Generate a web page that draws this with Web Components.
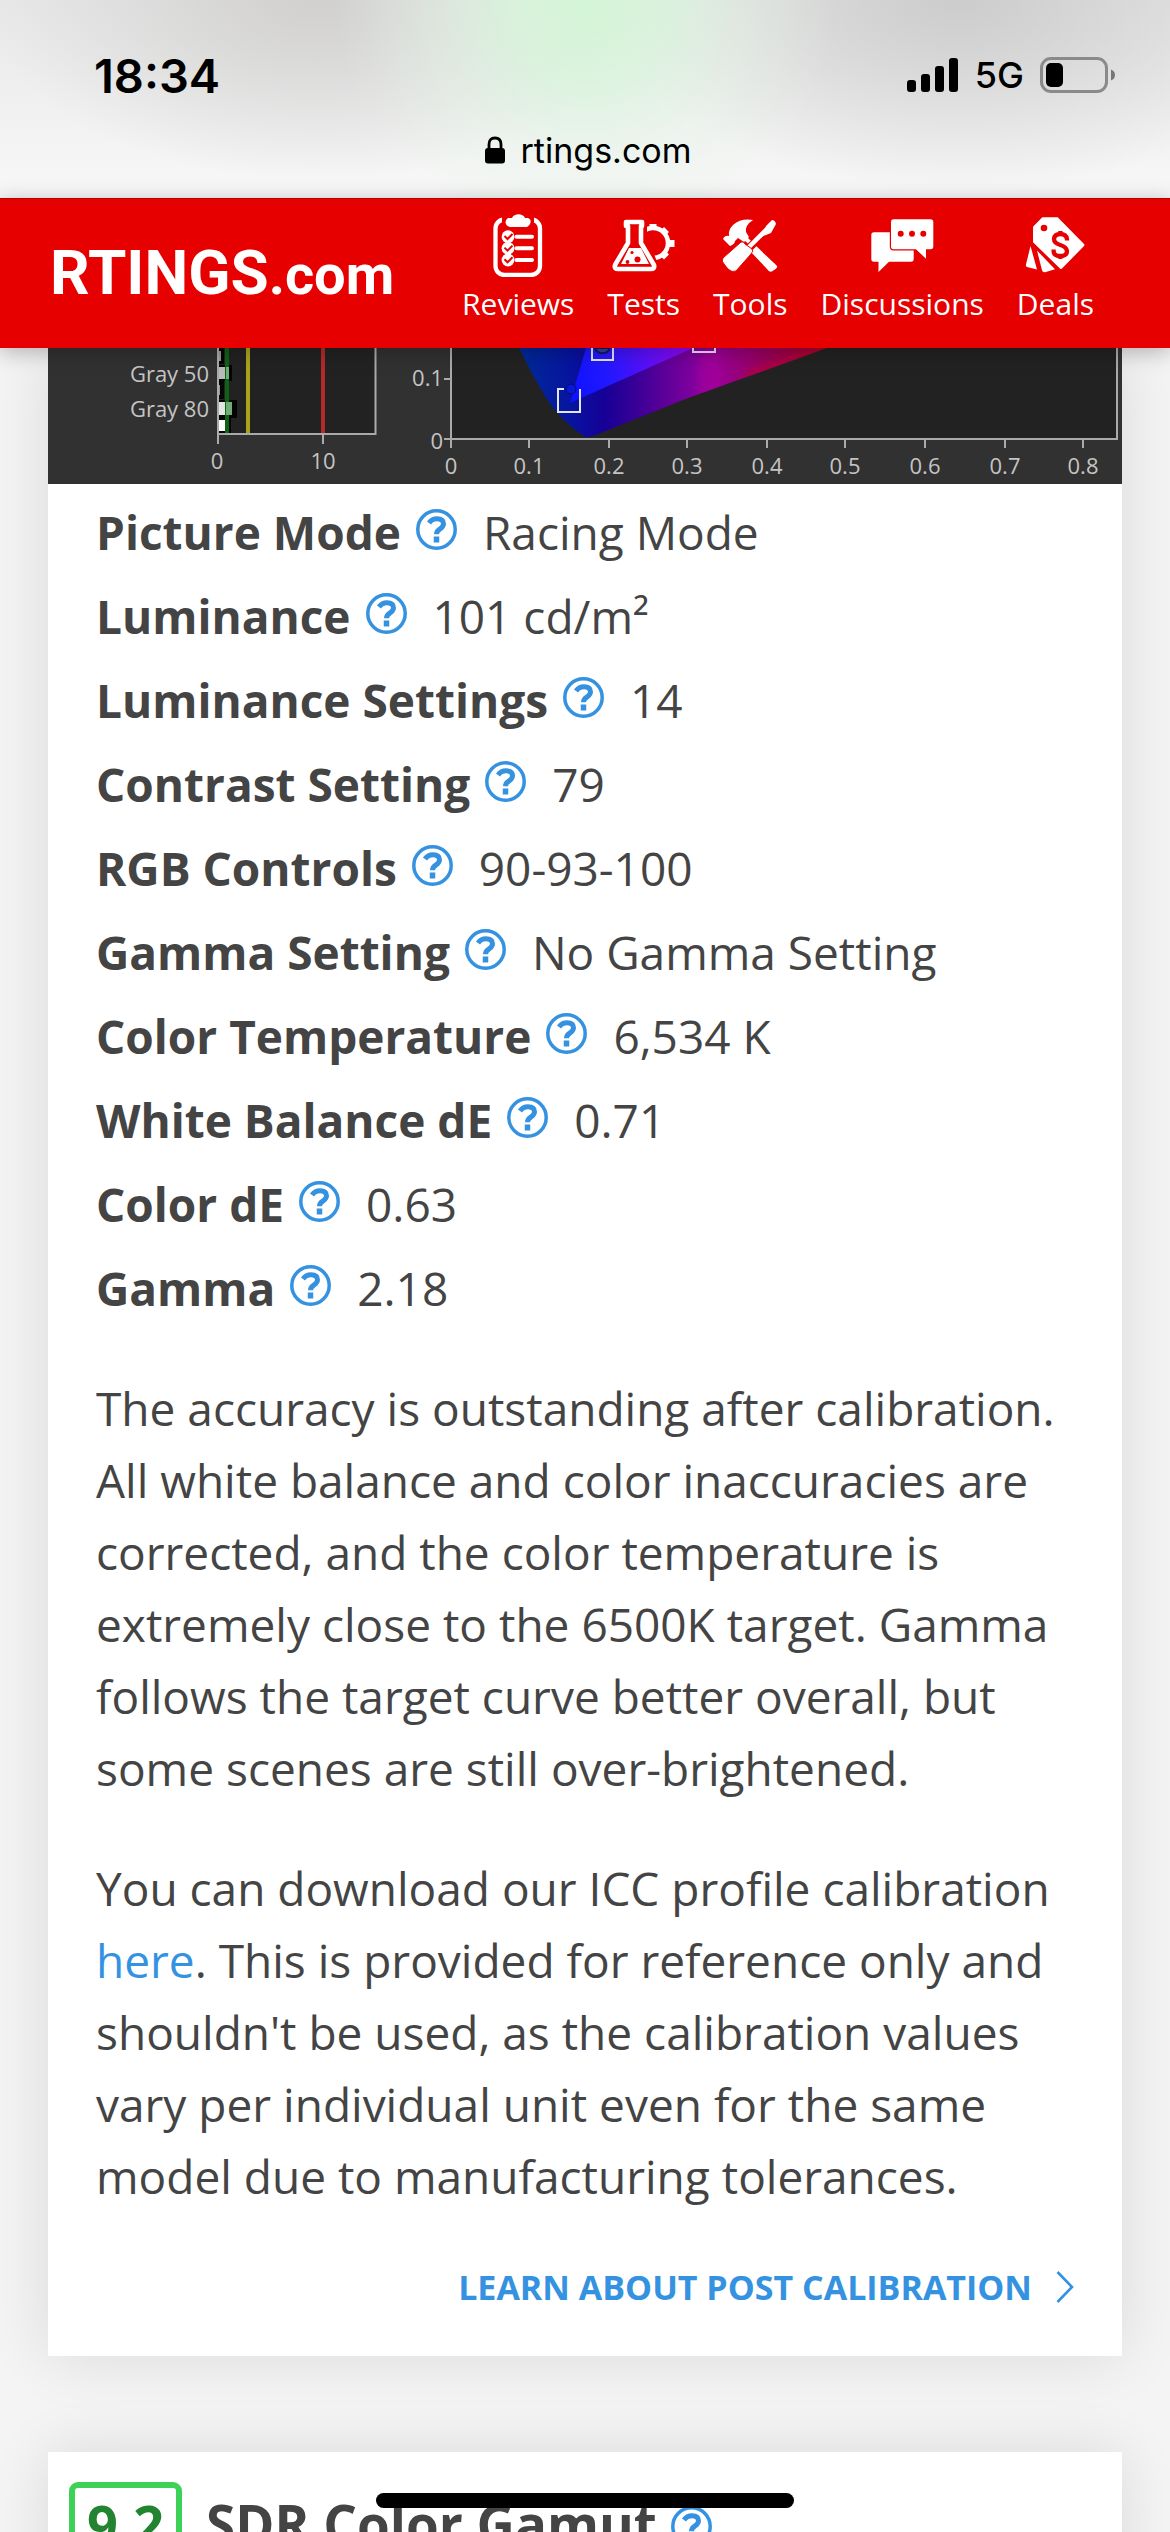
<!DOCTYPE html>
<html lang="en">
<head>
<meta charset="utf-8">
<meta name="viewport" content="width=device-width, initial-scale=1">
<title>RTINGS.com</title>
<style>
  html, body { margin: 0; height: 100%; }
  body { overflow: hidden; background: #f4f4f4; color: #444; font-family: "Open Sans", "Noto Sans", sans-serif; font-size: 46px; }
</style>
</head>
<body>
<app-screen>
  <status-bar slot="top" time="18:34" network="5G" site="rtings.com"></status-bar>
  <site-header slot="top">
    <nav-item label="Reviews"><svg viewBox="0 0 64 64" fill="#fff"><rect x="9.500" y="6.500" width="44.500" height="55.500" rx="9" fill="none" stroke="#fff" stroke-width="4.300"/><path d="M16 3h32v6l-5 7H21l-5-7z" fill="#e60000"/><path d="M22 5h4c2-5 11-5 13 0h3c5 2 2 8-1 9H24c-5-1-6-6-2-9z"/><path d="M30.500 23.700H46M30.500 35.300H46M30.500 47H46" stroke="#fff" stroke-width="4" stroke-linecap="round"/><circle cx="22" cy="23.700" r="6.400"/><circle cx="22" cy="35.300" r="6.400"/><circle cx="22" cy="47" r="6.400"/><path d="M18.500 23l3 3 5-5M18.500 34.600l3 3 5-5M18.500 46.300l3 3 5-5" fill="none" stroke="#e60000" stroke-width="2"/></svg></nav-item>
    <nav-item label="Tests"><svg viewBox="0 0 64 64" fill="#fff"><circle cx="41" cy="30" r="15" fill="none" stroke="#fff" stroke-width="4.500"/><g stroke="#fff" stroke-width="7"><path d="M41 16v-5M50.500 20.500l4-4M55 30.500h7.500M50.500 40l4 4"/></g><path d="M10 5h25v19l13 32-4 5H-2l2-9 14-26z" fill="#e60000"/><path d="M14 9h16v4h-1v17l13 22q1 4-3 4H6q-4 0-3-4l13-22V13h-2z" fill="none" stroke="#fff" stroke-width="4.600" stroke-linejoin="round"/><path d="M17 35h12l8 16H9z"/><g fill="#e60000"><circle cx="20" cy="39.500" r="1.600"/><circle cx="25.500" cy="46.500" r="3"/><circle cx="15.500" cy="49" r="1.900"/></g></svg></nav-item>
    <nav-item label="Tools"><svg viewBox="0 0 64 64" fill="#fff"><path d="M15 12Q23 5 35 7Q27 12 28 19L31 24L26 29L20 25L17 28Q17 31 12 33L5 26Q7 22 11 23Q10 17 15 12z"/><path d="M26 24l32 31" stroke="#fff" stroke-width="4"/><path d="M37 34l20 17q4 4-1 6-4 4-7-1L32 38z"/><path d="M30 36L51 15" stroke="#e60000" stroke-width="8"/><path d="M29 36L49 16" stroke="#fff" stroke-width="4.500"/><path d="M48 13l6-6q3 0 4 4l-5 9-5 2-5 2z"/><path d="M5 45l18-16q3-1 4 2l7 5q2 2-1 5L18 58q-4 2-8-2l-4-5q-3-3-1-6z" stroke="#e60000"/></svg></nav-item>
    <nav-item label="Discussions"><svg viewBox="0 0 64 64" fill="#fff"><path d="M4 19.300h37q2.700 0 2.700 2.700v24q0 2.700-2.700 2.700H19L8.500 59V48.700H4Q1.300 48.700 1.300 46V22q0-2.700 2.700-2.700z"/><path d="M23.500 6.300h37q2.800 0 2.800 2.700v24.500q0 2.800-2.800 2.800H56v9.500l-10-9.500H23.500q-2.500 0-2.500-2.800V9q0-2.700 2.500-2.700z" stroke="#e60000" stroke-width="2.400" paint-order="stroke"/><g fill="#e60000"><circle cx="30.700" cy="20.700" r="3"/><circle cx="42" cy="20.700" r="3"/><circle cx="53.300" cy="20.700" r="3"/></g></svg></nav-item>
    <nav-item label="Deals"><svg viewBox="0 0 64 64" fill="#fff"><path d="M19.300 4.300h15.400L61 31q1 1 0 2L39 55.500q-1 1-2 0L10 29.300V13.700z"/><path d="M7.500 33L14 56.500 4 54q-1.500-1-1-2.500zM14 37.500L32 56.300 22 59.300q-2.500.3-3-2z"/><circle cx="21" cy="15" r="3.300" fill="#e60000"/><path d="M44 27.500v-1.500q-1-5-6.700-5t-6.300 5q0 4 6.300 6t6.700 6q0 5-6.700 5t-6.700-5v-1.500M37.400 18v4M37.400 42v4" fill="none" stroke="#e60000" stroke-width="4.300"/></svg></nav-item>
  </site-header>
  <result-card>
    <calibration-chart></calibration-chart>
    <spec-list>
      <spec-row label="Picture Mode">Racing Mode</spec-row>
      <spec-row label="Luminance">101 cd/m²</spec-row>
      <spec-row label="Luminance Settings">14</spec-row>
      <spec-row label="Contrast Setting">79</spec-row>
      <spec-row label="RGB Controls">90-93-100</spec-row>
      <spec-row label="Gamma Setting">No Gamma Setting</spec-row>
      <spec-row label="Color Temperature">6,534 K</spec-row>
      <spec-row label="White Balance dE">0.71</spec-row>
      <spec-row label="Color dE">0.63</spec-row>
      <spec-row label="Gamma">2.18</spec-row>
    </spec-list>
    <review-copy></review-copy>
  </result-card>
  <result-card><score-heading score="9.2">SDR Color Gamut</score-heading></result-card>
</app-screen>
<home-indicator></home-indicator>

<script>
function define(name, template) {
  customElements.define(name, class extends HTMLElement {
    constructor() {
      super();
      this.attachShadow({ mode: 'open' });
    }
    connectedCallback() {
      this.shadowRoot.innerHTML = template(this);
    }
  });
}

define('app-screen', () => `
  <style>
    :host { display: block; min-height: 100%; }
    header { position: relative; z-index: 2; }
    main { display: flex; flex-direction: column; gap: 96px; padding: 0 48px; }
  </style>
  <header><slot name="top"></slot></header>
  <main><slot></slot></main>`);

define('status-bar', el => `
  <style>
    :host {
      display: block; height: 198px; box-sizing: border-box; padding: 46px 54px 0 94px;
      color: #000; font-family: Inter, "Liberation Sans", sans-serif;
      background:
        radial-gradient(ellipse 250px 250px at 50% 0, #d3f5d6 0%, #d8f5dbcc 30%, #e4f5e655 65%, #f0f6f000 100%),
        radial-gradient(ellipse 330px 180px at 27% 0, #d1d0cf, #d6d5d400),
        radial-gradient(ellipse 360px 190px at 82% 0, #cccccc, #d6d5d400),
        linear-gradient(#e8e8e8, #f6f6f6 90%);
    }
    .row { display: flex; justify-content: space-between; align-items: center; height: 58px; }
    .time { font-size: 47px; font-weight: 600; }
    .signal { display: flex; align-items: center; gap: 16px; font-size: 36px; font-weight: 500; }
    .site { display: flex; justify-content: center; align-items: center; gap: 15px; height: 44px; margin: 24px 0 0; padding-right: 34px; font-size: 34px; }
    svg { display: block; }
  </style>
  <div class="row">
    <span class="time">${el.getAttribute('time')}</span>
    <span class="signal">
      <svg width="52" height="36"><rect y="23" width="9" height="12" rx="3"/><rect x="14" y="17" width="9" height="18" rx="3"/><rect x="28" y="9" width="9" height="26" rx="3"/><rect x="42" y="1" width="9" height="34" rx="3"/></svg>
      <span>${el.getAttribute('network')}</span>
      <svg width="76" height="36"><rect x="1.500" y="1.500" width="65" height="33" rx="9.500" fill="none" stroke="#8a8a8a" stroke-width="3"/><rect x="6" y="6" width="17" height="24" rx="5"/><path d="M71 12.500q4 1.500 4 5.500t-4 5.500z" fill="#777"/></svg>
    </span>
  </div>
  <div class="site">
    <svg width="21" height="28"><rect y="12" width="20" height="15.500" rx="3"/><path d="M4 13V8.500Q4 2 10 2t6 6.500V13" fill="none" stroke="#000" stroke-width="2.800"/></svg>
    <span>${el.getAttribute('site')}</span>
  </div>`);

define('site-header', () => `
  <style>
    :host { display: flex; justify-content: space-between; align-items: center; height: 150px; box-sizing: border-box; padding: 0 76px 0 50px; background: #e60000; border-top: 1px solid #b60000; box-shadow: 0 4px 20px #0004; color: #fff; }
    .logo { color: inherit; text-decoration: none; font: bold 62px/80px Roboto, "Liberation Sans", sans-serif; }
    .logo span { font-size: 56px; }
    nav { display: flex; gap: 33px; margin-bottom: 12px; }
  </style>
  <a class="logo" href="#home">RTINGS<span>.com</span></a>
  <nav><slot></slot></nav>`);

define('nav-item', el => `
  <style>
    a { display: flex; flex-direction: column; align-items: center; gap: 8px; color: #fff; text-decoration: none; font-size: 30px; line-height: 38px; }
    ::slotted(svg) { display: block; width: 64px; height: 64px; }
  </style>
  <a href="#${el.getAttribute('label').toLowerCase()}"><slot></slot><span>${el.getAttribute('label')}</span></a>`);

define('result-card', () => `
  <style>
    :host { display: block; background: #fff; box-shadow: 0 0 60px #0000001c; }
  </style>
  <slot></slot>`);

/* Tail end of the dE bar chart and the CIE chromaticity plot. */
define('calibration-chart', () => {
  const ticks = [[403, '0'], [481, '0.1'], [561, '0.2'], [639, '0.3'], [719, '0.4'], [797, '0.5'], [877, '0.6'], [957, '0.7'], [1035, '0.8']];
  return `
  <style>
    :host { display: block; }
    svg { display: block; width: 100%; height: auto; font-family: "Open Sans", sans-serif; font-size: 22px; }
    .soft { filter: blur(3px); }
  </style>
  <svg viewBox="0 0 1074 136" role="img" aria-label="Post calibration dE and color gamut charts">
    <defs>
      <linearGradient id="low" x1="470" x2="780" y1="0" y2="0" gradientUnits="userSpaceOnUse">
        <stop offset="0" stop-color="#002b96"/><stop offset=".17" stop-color="#0714a0"/><stop offset=".28" stop-color="#160096"/><stop offset=".42" stop-color="#480098"/><stop offset=".58" stop-color="#86009e"/><stop offset=".64" stop-color="#980096"/><stop offset=".8" stop-color="#98005c"/><stop offset="1" stop-color="#a80022"/>
      </linearGradient>
      <linearGradient id="high" x1="520" x2="645" y1="50" y2="0" gradientUnits="userSpaceOnUse">
        <stop offset="0" stop-color="#0a12ff"/><stop offset=".35" stop-color="#2418ff"/><stop offset="1" stop-color="#9a05f4"/>
      </linearGradient>
      <clipPath id="locus"><path d="M471 0Q483 25 498 50Q512 72 537 89Q542 90 560 82L640 50L779 0z"/></clipPath>
    </defs>
    <rect width="1074" height="136" fill="#313131"/>
    <path d="M170 0h158v86H170zM403 0h666v91H403z" fill="#222"/>
    <path d="M170 0h6v16h-6zM170 17h14v16h-14zM170 33h6v18h-6zM170 52h19v18h-19zM170 70h13v16h-13z" fill="#050505"/>
    <path d="M170 3h3v10h-3zM170 37h2v10h-2z" fill="#999"/>
    <rect x="170" y="19" width="8" height="12" fill="#bbb"/><rect x="170" y="54" width="8" height="13" fill="#e5e5e5"/><rect x="170" y="72" width="7" height="11" fill="#fff"/>
    <path d="M179 0v86" stroke="#116018" stroke-width="4"/><path d="M178 19h3v12h-3zM178 54h6v13h-6z" fill="#70ae75"/>
    <path d="M200 0v86" stroke="#aaa41d" stroke-width="4"/><path d="M275 0v86" stroke="#b42a2a" stroke-width="4"/>
    <path d="M170 0v96M170 86h157.500V0M275 87v9" fill="none" stroke="#aaa" stroke-width="2"/>
    <g clip-path="url(#locus)">
      <rect x="460" width="330" height="92" fill="url(#low)"/>
      <ellipse class="soft" cx="662" cy="30" rx="12" ry="30" fill="#a9009c88"/>
      <path class="soft" d="M700 22L779-2 770 10 690 40z" fill="#bd002e88"/>
      <path d="M538 0L522 55 645 0z" fill="url(#high)"/>
    </g>
    <path d="M516 41h-6v23h22V41M544 0v12h21V0M645 0v4h22V0" fill="none" stroke="#e4e4f4" stroke-width="2"/>
    <circle cx="523" cy="41" r="5" fill="#0718d8" stroke="#080b66" stroke-width="1"/><path d="M547 0a8 8 0 0 0 15 0z" fill="#34409a" stroke="#101568" stroke-width="2"/>
    <path d="M403 0v100M396 91h673V0M396 31h7${ticks.map(t => `M${t[0]} 91v9`).join('')}" fill="none" stroke="#aaa" stroke-width="2"/>
    <g fill="#c4c4c4">
      <g text-anchor="end"><text x="161" y="34">Gray 50</text><text x="161" y="69">Gray 80</text><text x="395" y="38">0.1</text><text x="395" y="101">0</text></g>
      <g text-anchor="middle"><text x="169" y="121">0</text><text x="275" y="121">10</text>${ticks.map(t => `<text x="${t[0]}" y="126">${t[1]}</text>`).join('')}</g>
    </g>
  </svg>`;
});

define('help-button', () => `
  <style>
    :host { display: inline-block; }
    button { display: block; margin: 0; padding: 0; border: 0; background: none; color: #3592e1; }
    svg { display: block; width: 41px; height: 41px; }
  </style>
  <button type="button" aria-label="Help"><svg viewBox="0 0 41 41" fill="none" stroke="currentColor"><circle cx="20.500" cy="20.500" r="18.700" stroke-width="3.500"/><path d="M13 14q3-4.200 8-4.200 6.500 0 6.500 5 0 2.800-3.500 5.200-3.500 2-3.500 5.300" stroke-width="5"/><path d="M20.500 27.500v6" stroke-width="5.500"/></svg></button>`);

define('spec-list', () => `
  <style>
    :host { display: flex; flex-direction: column; padding: 6px 48px 42px; }
  </style>
  <slot></slot>`);

define('spec-row', el => `
  <style>
    :host { display: flex; align-items: baseline; height: 84px; line-height: 84px; }
    help-button { margin: 0 26px 0 15px; }
  </style>
  <b>${el.getAttribute('label')}</b><help-button></help-button><span><slot></slot></span>`);

define('review-copy', () => `
  <style>
    :host { display: flex; flex-direction: column; gap: 48px; padding: 0 48px 42px; line-height: 72px; }
    p { margin: 0; }
    a { color: #3592e1; text-decoration: none; }
    .more { display: flex; align-items: center; align-self: flex-end; gap: 24px; font-size: 34px; font-weight: 700; line-height: 54px; text-transform: uppercase; }
    svg { width: 18px; height: 32px; }
  </style>
  <p>The accuracy is outstanding after calibration. All white balance and color inaccuracies are corrected, and the color temperature is extremely close to the 6500K target. Gamma follows the target curve better overall, but some scenes are still over-brightened.</p>
  <p>You can download our ICC profile calibration <a href="#icc">here</a>. This is provided for reference only and shouldn't be used, as the calibration values vary per individual unit even for the same model due to manufacturing tolerances.</p>
  <a class="more" href="#learn"><span>Learn about post calibration</span><svg viewBox="0 0 18 32" fill="none" stroke="currentColor" stroke-width="2.600"><path d="M1.500 1L16 16 1.500 31"/></svg></a>`);

define('score-heading', el => `
  <style>
    :host { display: flex; align-items: center; padding: 30px 21px; }
    .score { box-sizing: border-box; width: 113px; height: 84px; border: 6px solid #3dd157; border-radius: 9px; color: #228430; font-weight: 700; font-size: 54px; line-height: 72px; text-align: center; }
    h2 { margin: 0 14px 0 24px; font-size: 53px; line-height: 72px; }
    help-button { margin-top: 4px; }
  </style>
  <div class="score">${el.getAttribute('score')}</div><h2><slot></slot></h2><help-button></help-button>`);

define('home-indicator', () => `
  <style>
    :host { position: fixed; z-index: 3; left: 0; right: 0; bottom: 24px; display: flex; justify-content: center; pointer-events: none; }
    div { width: 418px; height: 15px; border-radius: 8px; background: #000; }
  </style>
  <div></div>`);
</script>
</body>
</html>
